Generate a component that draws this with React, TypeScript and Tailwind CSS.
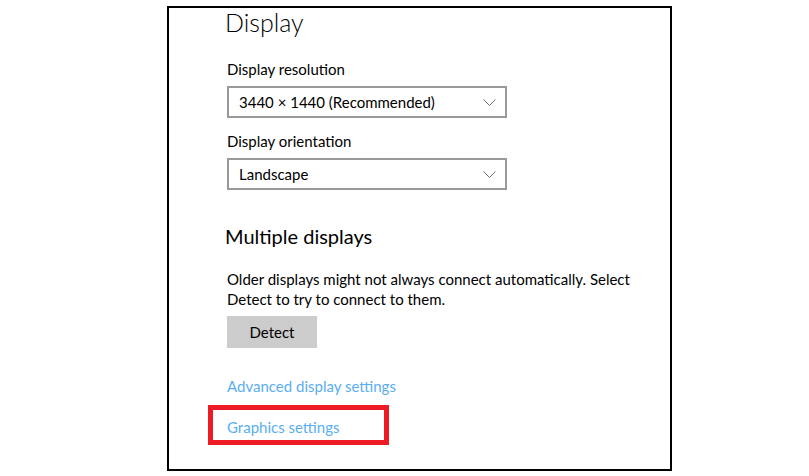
import React from "react"

const Chevron = () => (
  <svg width="13" height="7" viewBox="0 0 13 7" fill="none">
    <polyline points="0.5,0.5 6.5,6.5 12.5,0.5" stroke="#6e6e6e" strokeWidth="1" />
  </svg>
)

const Dropdown = ({ value }: { value: string }) => (
  <div className="mt-[7px] flex h-[32px] w-[280px] items-center justify-between border-2 border-[#999999] pl-[10px] pr-[9px] text-[15px] leading-[20px]">
    <span>{value}</span>
    <Chevron />
  </div>
)

const App = () => {
  return (
    <div className="h-[476px] w-[809px] overflow-hidden bg-white pt-[6px] pl-[167px] font-['Lato','Liberation_Sans',sans-serif] text-black">
      <div className="h-[465px] w-[505px] border-2 border-black pl-[58px]">
        <h1 className="-ml-[2px] mt-[2px] text-[25px] font-light leading-[25px]">Display</h1>

        <div className="mt-[24px] text-[15px] leading-[20px]">Display resolution</div>
        <div className="mt-px">
          <Dropdown value="3440 × 1440 (Recommended)" />
        </div>

        <div className="mt-[13px] text-[15px] leading-[20px]">Display orientation</div>
        <Dropdown value="Landscape" />

        <h2 className="-ml-[2px] mt-[32px] text-[20px] leading-[28px]">Multiple displays</h2>

        <p className="mt-[19px] w-[420px] text-[15px] leading-[20px]">
          Older displays might not always connect automatically. Select Detect to try to connect to them.
        </p>

        <button className="mt-[7px] flex h-[32px] w-[90px] items-center justify-center bg-[#cccccc] text-[15px] leading-[20px]">
          Detect
        </button>

        <div className="mt-[28px] text-[15px] leading-[20px] text-[#5aaef0]">Advanced display settings</div>

        <div className="-ml-[19px] mt-[9px] h-[40px] w-[181px] border-[5px] border-[#ed1c24] pl-[14px] pt-[5px]">
          <span className="text-[15px] leading-[20px] text-[#5aaef0]">Graphics settings</span>
        </div>
      </div>
    </div>
  )
}

export default App
